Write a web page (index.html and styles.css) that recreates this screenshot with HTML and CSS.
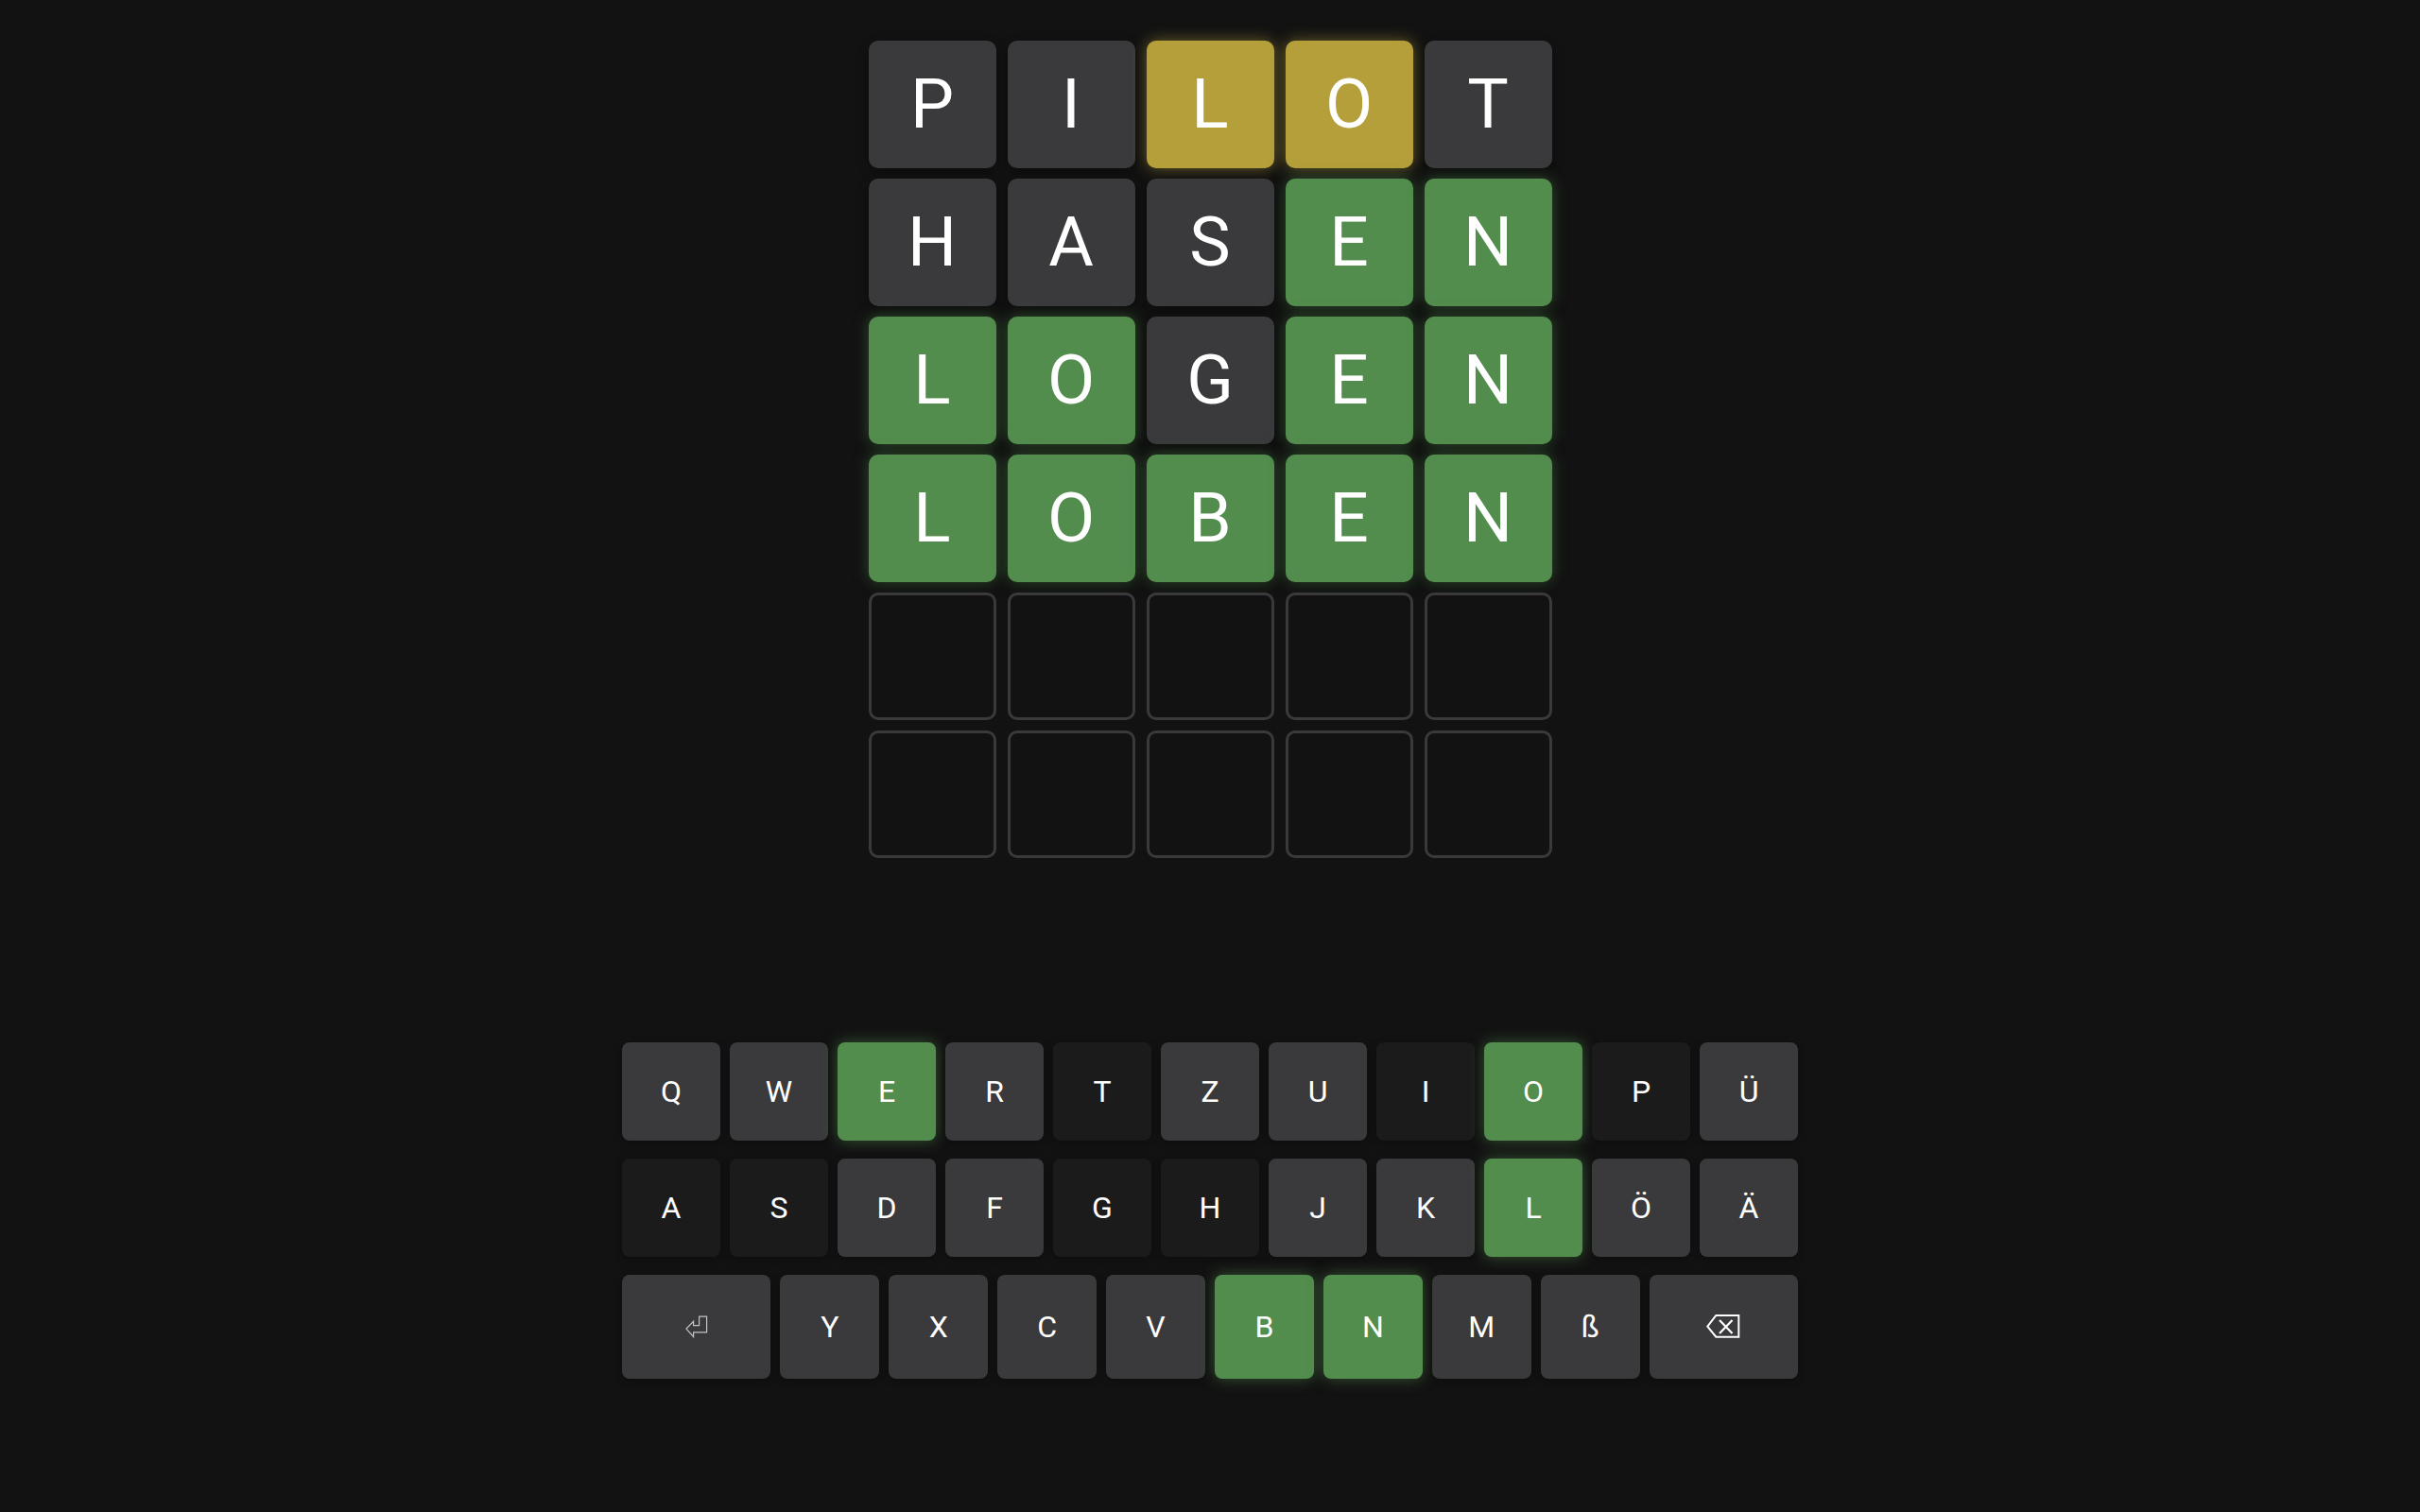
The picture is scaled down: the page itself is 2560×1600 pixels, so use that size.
FILE: index.html
```html
<!DOCTYPE html>
<html lang="de">
<head>
<meta charset="utf-8">
<title>Wordle</title>
<link rel="stylesheet" href="styles.css">
</head>
<body>
<main class="app">
  <section class="board">
    <div class="row">
      <div class="tile absent">P</div><div class="tile absent">I</div><div class="tile present">L</div><div class="tile present">O</div><div class="tile absent">T</div>
    </div>
    <div class="row">
      <div class="tile absent">H</div><div class="tile absent">A</div><div class="tile absent">S</div><div class="tile correct">E</div><div class="tile correct">N</div>
    </div>
    <div class="row">
      <div class="tile correct">L</div><div class="tile correct">O</div><div class="tile absent">G</div><div class="tile correct">E</div><div class="tile correct">N</div>
    </div>
    <div class="row">
      <div class="tile correct">L</div><div class="tile correct">O</div><div class="tile correct">B</div><div class="tile correct">E</div><div class="tile correct">N</div>
    </div>
    <div class="row">
      <div class="tile empty"></div><div class="tile empty"></div><div class="tile empty"></div><div class="tile empty"></div><div class="tile empty"></div>
    </div>
    <div class="row">
      <div class="tile empty"></div><div class="tile empty"></div><div class="tile empty"></div><div class="tile empty"></div><div class="tile empty"></div>
    </div>
  </section>

  <section class="keyboard">
    <div class="krow">
      <div class="key">Q</div><div class="key">W</div><div class="key k-correct">E</div><div class="key">R</div><div class="key k-absent">T</div><div class="key">Z</div><div class="key">U</div><div class="key k-absent">I</div><div class="key k-correct">O</div><div class="key k-absent">P</div><div class="key">Ü</div>
    </div>
    <div class="krow">
      <div class="key k-absent">A</div><div class="key k-absent">S</div><div class="key">D</div><div class="key">F</div><div class="key k-absent">G</div><div class="key k-absent">H</div><div class="key">J</div><div class="key">K</div><div class="key k-correct">L</div><div class="key">Ö</div><div class="key">Ä</div>
    </div>
    <div class="krow krow-last">
      <div class="key wide" aria-label="Enter">
        <svg class="icon-enter" width="24" height="25" viewBox="0 0 24 25"><path d="M14.6 1.1 H22.6 V17.8 H8.6 V22.6 L1 14.1 L8.6 6.3 V10.6 H14.6 Z" fill="none" stroke="#c4c4c4" stroke-width="1.2" stroke-linejoin="miter"/></svg>
      </div>
      <div class="key">Y</div><div class="key">X</div><div class="key">C</div><div class="key">V</div><div class="key k-correct">B</div><div class="key k-correct">N</div><div class="key">M</div><div class="key">ß</div>
      <div class="key wide" aria-label="Backspace">
        <svg class="icon-back" width="36" height="26" viewBox="0 0 36 26"><path d="M1.3 12.7 L10.3 1 H34.3 V23.7 H10.3 Z" fill="none" stroke="#ffffff" stroke-width="2"/><path d="M14 6 L27.5 20 M27.5 6 L14 20" stroke="#ffffff" stroke-width="2.2"/></svg>
      </div>
    </div>
  </section>
</main>
</body>
</html>
```

FILE: styles.css
```css
html, body {
  margin: 0;
  padding: 0;
  background: #121212;
  height: 100%;
}

body {
  font-family: Roboto, "Liberation Sans", Arial, sans-serif;
  color: #ffffff;
}

.app {
  display: flex;
  flex-direction: column;
  align-items: center;
  padding-top: 43px;
}

.board {
  display: flex;
  flex-direction: column;
  gap: 11px;
}

.row {
  display: flex;
  gap: 12px;
}

.tile {
  width: 135px;
  height: 135px;
  box-sizing: border-box;
  border-radius: 10px;
  display: flex;
  align-items: center;
  justify-content: center;
  font-size: 73px;
  font-weight: 400;
  line-height: 1;
  color: #ffffff;
}

.tile.absent {
  background: #3a3a3c;
  box-shadow: 0 4px 12px rgba(0, 0, 0, 0.35);
}

.tile.present {
  background: #b59f3b;
  box-shadow: 0 0 16px rgba(181, 159, 59, 0.55);
}

.tile.correct {
  background: #538d4e;
  box-shadow: 0 0 16px rgba(83, 141, 78, 0.5), 0 4px 12px rgba(0, 0, 0, 0.3);
}

.tile.empty {
  background: #121212;
  border: 3px solid #3a3a3c;
}

.keyboard {
  margin-top: 195px;
  width: 1244px;
  display: flex;
  flex-direction: column;
  gap: 19px;
}

.krow {
  display: flex;
  gap: 10px;
  height: 104px;
}

.krow-last {
  height: 110px;
}

.key {
  flex: 1 1 0;
  display: flex;
  align-items: center;
  justify-content: center;
  background: #3a3a3c;
  border-radius: 8px;
  font-size: 32px;
  font-weight: 400;
  color: #ffffff;
  box-shadow: 0 2px 8px rgba(0, 0, 0, 0.3);
}

.key.wide {
  flex: 1.5 1 0;
}

.key.k-absent {
  background: #1b1b1c;
}

.key.k-correct {
  background: #538d4e;
  box-shadow: 0 0 16px rgba(83, 141, 78, 0.55);
}

.icon-enter,
.icon-back {
  display: block;
}
```
